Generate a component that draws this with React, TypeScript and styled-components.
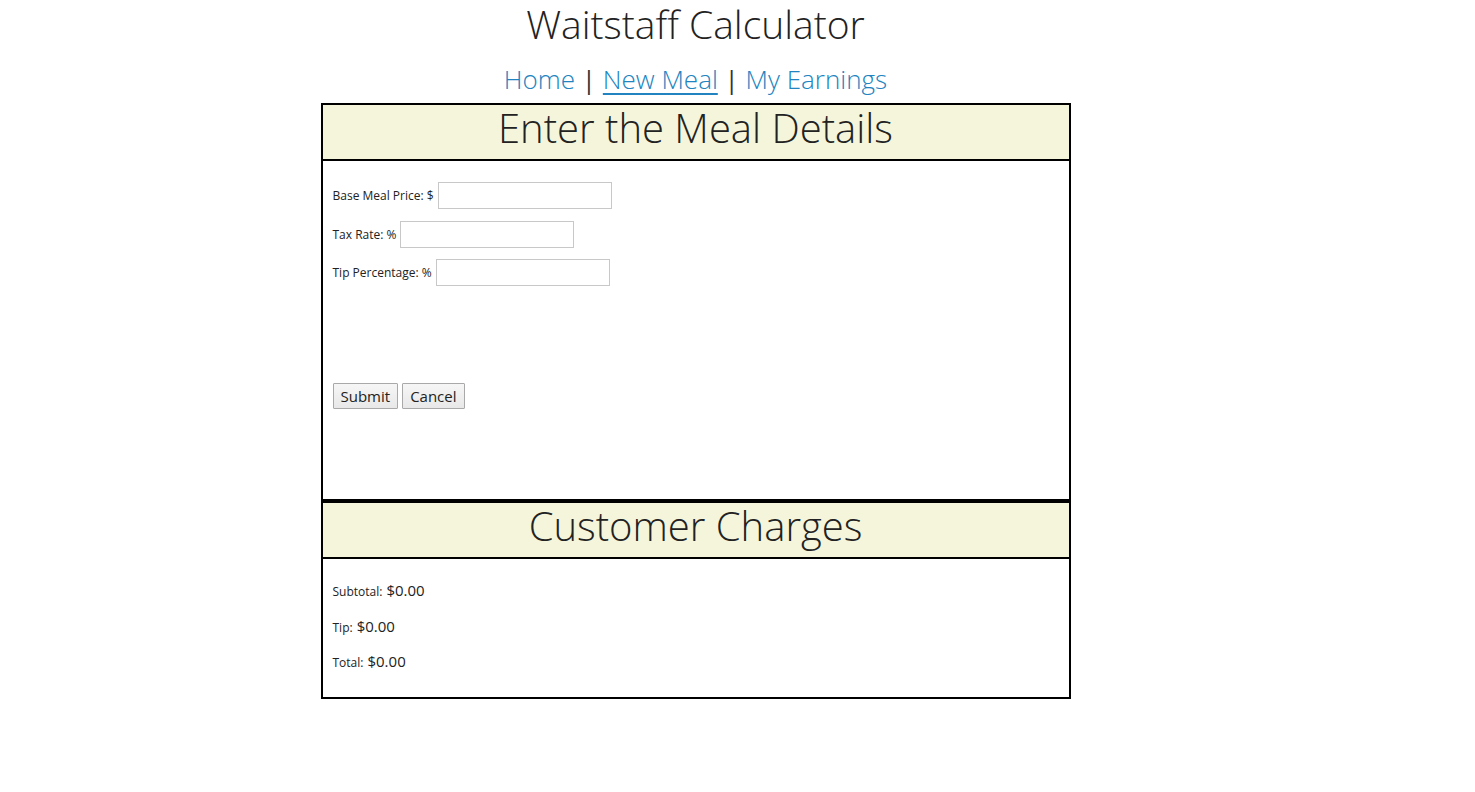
import styled, { createGlobalStyle } from "styled-components"

const GlobalStyle = createGlobalStyle`
    body {
        margin: 0;
        background: #fff;
        font-family: "Open Sans", "Liberation Sans", sans-serif;
        color: #222;
    }
`

const Page = styled.div`
    width: 1391px;
    text-align: center;
`

const Title = styled.h1`
    margin: 0;
    font-size: 39px;
    font-weight: 300;
    line-height: 48px;
    height: 48px;
    color: #222;
`

const Nav = styled.nav`
    margin-top: 11px;
    font-size: 26px;
    font-weight: 300;
    line-height: 40px;
    color: #333;
    height: 44px;
    white-space: pre;
`

const NavLink = styled.a<{ $active?: boolean }>`
    color: #2184c0;
    text-decoration: ${p => (p.$active ? "underline" : "none")};
    text-decoration-thickness: 2px;
    text-underline-offset: 4px;
    cursor: pointer;
`

const Sep = styled.span`
    color: #333;
    font-weight: 400;
`

const Panel = styled.section<{ $bodyHeight: number }>`
    width: 746px;
    margin: 0 auto;
    border: 2px solid #000;
    text-align: left;

    & > div:last-child {
        height: ${p => p.$bodyHeight}px;
    }
`

const PanelHeader = styled.h2`
    margin: 0;
    height: 54px;
    background: #f5f5dc;
    border-bottom: 2px solid #000;
    text-align: center;
    font-size: 40px;
    font-weight: 300;
    line-height: 46px;
    color: #222;
`

const PanelBody = styled.div`
    box-sizing: border-box;
    padding: 21px 10px 0;
    display: flex;
    flex-direction: column;
`

const FieldRow = styled.label`
    display: flex;
    align-items: center;
    gap: 4px;
    height: 27px;
    margin-bottom: 11.5px;
    font-size: 12px;
    color: #222;
`

const TextInput = styled.input`
    box-sizing: border-box;
    width: 174px;
    height: 27px;
    border: 1px solid #c8c8c8;
    padding: 2px 4px;
    font-size: 13px;
    outline: none;
`

const Buttons = styled.div`
    display: flex;
    gap: 4px;
    margin-top: 85px;
`

const Button = styled.button`
    box-sizing: border-box;
    height: 26px;
    padding: 0 7px;
    font-family: "Open Sans", "Liberation Sans", sans-serif;
    font-size: 15px;
    color: #222;
    background: linear-gradient(#f6f6f6, #e8e8e8);
    border: 1px solid #a9a9a9;
    border-radius: 1px;
    cursor: pointer;
`

const ChargeRow = styled.div`
    display: flex;
    align-items: baseline;
    gap: 4px;
    height: 20px;
    margin-bottom: 15.5px;
    font-size: 12px;
    color: #222;
`

const Amount = styled.span`
    font-size: 15px;
`

const App = () => {
    return (
        <>
            <GlobalStyle />
            <Page>
                <Title>Waitstaff Calculator</Title>
                <Nav>
                    <NavLink>Home</NavLink>
                    <Sep> | </Sep>
                    <NavLink $active>New Meal</NavLink>
                    <Sep> | </Sep>
                    <NavLink>My Earnings</NavLink>
                </Nav>

                <Panel $bodyHeight={338}>
                    <PanelHeader>Enter the Meal Details</PanelHeader>
                    <PanelBody>
                        <FieldRow>
                            Base Meal Price: $
                            <TextInput type="text" />
                        </FieldRow>
                        <FieldRow>
                            Tax Rate: %
                            <TextInput type="text" />
                        </FieldRow>
                        <FieldRow>
                            Tip Percentage: %
                            <TextInput type="text" />
                        </FieldRow>
                        <Buttons>
                            <Button>Submit</Button>
                            <Button>Cancel</Button>
                        </Buttons>
                    </PanelBody>
                </Panel>

                <Panel $bodyHeight={138}>
                    <PanelHeader>Customer Charges</PanelHeader>
                    <PanelBody>
                        <ChargeRow>
                            Subtotal: <Amount>$0.00</Amount>
                        </ChargeRow>
                        <ChargeRow>
                            Tip: <Amount>$0.00</Amount>
                        </ChargeRow>
                        <ChargeRow>
                            Total: <Amount>$0.00</Amount>
                        </ChargeRow>
                    </PanelBody>
                </Panel>
            </Page>
        </>
    )
}

export default App
